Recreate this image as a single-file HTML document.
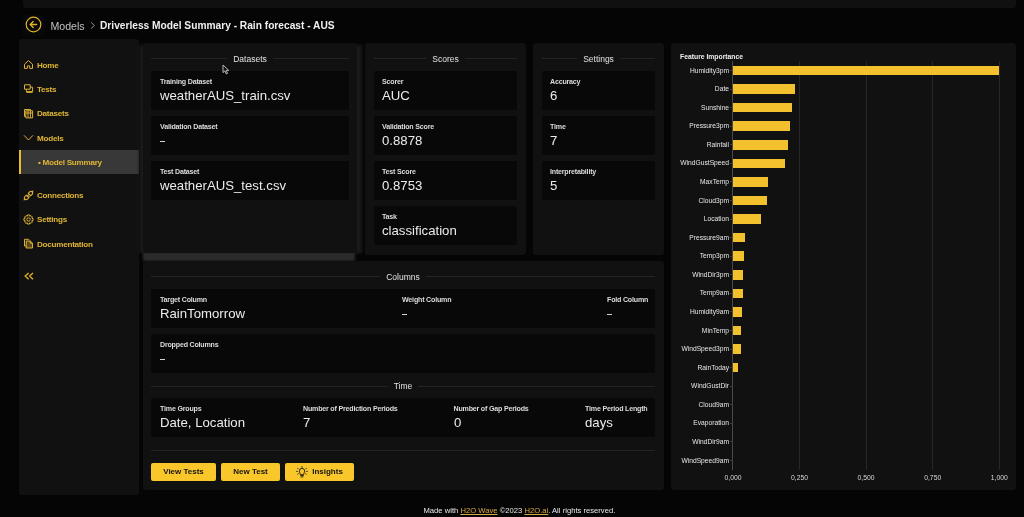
<!DOCTYPE html>
<html><head><meta charset="utf-8">
<style>
*{margin:0;padding:0;box-sizing:border-box}
html,body{width:1024px;height:517px;overflow:hidden;background:#050505;font-family:"Liberation Sans",sans-serif;color:#e6e6e6}
.abs{position:absolute}
body{will-change:transform}
.topbar{left:23px;top:0;width:993px;height:8px;background:#101010;border-radius:0 0 3px 3px}
.back{left:23px;top:14.5px;width:22px;height:21px;background:#080808}
.crumb{top:18.5px;font-size:10.2px;line-height:14px;white-space:nowrap}
.side{left:19px;top:39px;width:120px;height:456px;background:#111111;border-radius:3px}
.nav{left:37px;font-size:8.1px;letter-spacing:-0.25px;font-weight:bold;color:#e0b534;line-height:10px;white-space:nowrap}
.ico{left:24px;width:10px;height:10px}
.sel{left:19px;top:150px;width:120px;height:24px;background:#383838;border-left:2px solid #e8bd2e}
.panel{background:#111111;border-radius:3px}
.card{background:#080808;position:absolute;border-radius:2px}
.lbl{position:absolute;font-size:7.1px;letter-spacing:-0.2px;font-weight:bold;color:#dcdcdc;white-space:nowrap;line-height:8px}
.val{position:absolute;font-size:13.2px;color:#ececec;white-space:nowrap;line-height:15px}
.hdr{position:absolute;display:flex;align-items:center;height:10px}
.hdr i{flex:1;height:1px;background:#242424}
.hdr span{font-size:8.5px;color:#e2e2e2;white-space:nowrap;line-height:10px;margin:0 6px}
.ln{position:absolute;height:1px;background:#242424}
.btn{position:absolute;background:#fac72a;border-radius:2px;color:#141414;font-size:8px;font-weight:bold;text-align:center;line-height:18px;white-space:nowrap}
.flbl{position:absolute;right:295px;font-size:6.7px;color:#e6e6e6;white-space:nowrap;line-height:8px;text-align:right}
.bar{position:absolute;left:733px;height:9.6px;background:#f4c12e}
.grid{position:absolute;top:61px;width:1px;height:409px;background:#262626}
.ax{position:absolute;top:473.5px;font-size:6.8px;color:#d6d6d6;line-height:8px;white-space:nowrap;transform:translateX(-50%)}
</style></head><body>
<div class="abs topbar"></div>
<div class="abs back"></div>
<svg class="abs" style="left:24.8px;top:16.2px" width="17" height="17" viewBox="0 0 17 17">
<circle cx="8.5" cy="8.5" r="7.3" fill="none" stroke="#dfb02c" stroke-width="1.2"/>
<path d="M11.6 8.5H5.6M8.2 5.5L5.2 8.5L8.2 11.5" fill="none" stroke="#dfb02c" stroke-width="1.4" stroke-linecap="round" stroke-linejoin="round"/>
</svg>
<div class="abs crumb" style="left:50.5px;color:#c2c2c2;font-size:10.6px">Models</div>
<svg class="abs" style="left:89px;top:21px" width="7" height="9" viewBox="0 0 7 9" fill="none" stroke="#9a9a9a" stroke-width="1"><path d="M2.2 1.3L5.2 4.5L2.2 7.7"/></svg>
<div class="abs crumb" style="left:100px;font-weight:bold;color:#efefef">Driverless Model Summary - Rain forecast - AUS</div>

<div class="abs side"></div>
<div class="abs sel"></div>
<svg class="abs" style="left:23px;top:59px" width="11" height="11" viewBox="0 0 11 11" fill="none" stroke="#deb134" stroke-width="1" stroke-linejoin="round"><path d="M1.5 5.2L5.5 1.6L9.5 5.2V9.4H6.7V6.9H4.3V9.4H1.5Z"/></svg>
<svg class="abs" style="left:23px;top:83px" width="11" height="11" viewBox="0 0 11 11" fill="none" stroke="#deb134" stroke-width="1" stroke-linejoin="round"><path d="M1.5 1.8H7.2V6.2H1.5Z"/><path d="M3.4 6.2V8.6H9.6V4.2H7.2"/><path d="M3.4 9.4H9.6"/></svg>
<svg class="abs" style="left:23px;top:107.5px" width="11" height="11" viewBox="0 0 11 11" fill="none" stroke="#deb134" stroke-width="1"><path d="M1.5 1.5H7.5V2.8"/><path d="M1.5 1.5V8.5H2.8"/><path d="M2.8 2.8H9.6V9.9H2.8Z"/><path d="M5 2.8V9.9M7.4 2.8V9.9M2.8 5H9.6"/></svg>
<svg class="abs" style="left:23px;top:133px" width="11" height="9" viewBox="0 0 11 9" fill="none" stroke="#deb134" stroke-width="1"><path d="M1 2.3L5.5 7L10 2.3"/></svg>
<svg class="abs" style="left:23px;top:189.5px" width="11" height="11" viewBox="0 0 11 11" fill="none" stroke="#deb134" stroke-width="1.1" stroke-linecap="round"><path d="M3.3 5.2L5.8 7.7L4.4 9.1C3.6 9.9 2.6 9.9 1.9 9.1C1.1 8.4 1.1 7.4 1.9 6.6Z"/><path d="M1.9 9.1L1.1 9.9"/><path d="M5.3 3.3L7.7 5.7L9.1 4.3C9.9 3.5 9.9 2.5 9.1 1.8C8.4 1 7.4 1 6.6 1.8Z"/><path d="M9.1 1.8L9.9 1M4.2 6.2L5.4 5M6.2 6.4L5.5 7.1"/></svg>
<svg class="abs" style="left:23px;top:213.5px" width="11" height="11" viewBox="0 0 11 11" fill="none" stroke="#deb134" stroke-width="1"><path d="M4.6 0.9H6.4L6.8 2.3L8 1.6L9.4 3L8.7 4.2L10.1 4.6V6.4L8.7 6.8L9.4 8L8 9.4L6.8 8.7L6.4 10.1H4.6L4.2 8.7L3 9.4L1.6 8L2.3 6.8L0.9 6.4V4.6L2.3 4.2L1.6 3L3 1.6L4.2 2.3Z" stroke-linejoin="round"/><circle cx="5.5" cy="5.5" r="1.7"/></svg>
<svg class="abs" style="left:23px;top:238px" width="11" height="11" viewBox="0 0 11 11" fill="none" stroke="#deb134" stroke-width="1" stroke-linejoin="round"><path d="M1.5 1.3H5.6L6.6 2.3"/><path d="M1.5 1.3V8H3.2"/><path d="M3.2 3H7.3L9.5 5.2V10H3.2Z" fill="#deb134" fill-opacity="0.35"/><path d="M7.3 3V5.2H9.5"/></svg>
<svg class="abs" style="left:23px;top:271px" width="12" height="10" viewBox="0 0 12 10" fill="none" stroke="#dcae2e" stroke-width="1.4" stroke-linejoin="miter"><path d="M5.6 2L2.2 5.1L5.6 8.2M10 2L6.6 5.1L10 8.2"/></svg>
<div class="abs nav" style="top:60.5px">Home</div>
<div class="abs nav" style="top:84.5px">Tests</div>
<div class="abs nav" style="top:109.0px">Datasets</div>
<div class="abs nav" style="top:133.5px">Models</div>
<div class="abs nav" style="top:158.0px;left:38px">&bull; Model Summary</div>
<div class="abs nav" style="top:190.5px">Connections</div>
<div class="abs nav" style="top:215.0px">Settings</div>
<div class="abs nav" style="top:239.5px">Documentation</div>

<!-- Datasets panel -->
<div class="abs" style="left:139px;top:45px;width:223px;height:208px;background:#1a1a1a;filter:blur(1.5px)"></div>
<div class="abs" style="left:143px;top:252px;width:212px;height:9px;background:#2b2b2b;filter:blur(1.2px)"></div>
<div class="abs panel" style="left:143px;top:43px;width:214px;height:210px"></div>
<div class="hdr" style="left:151px;top:53.5px;width:198px"><i></i><span>Datasets</span><i></i></div>
<div class="card" style="left:151px;top:71px;width:198px;height:39px"></div>
<div class="lbl" style="left:160px;top:78px">Training Dataset</div>
<div class="val" style="left:160px;top:88px">weatherAUS_train.csv</div>
<div class="card" style="left:151px;top:116px;width:198px;height:39px"></div>
<div class="lbl" style="left:160px;top:123px">Validation Dataset</div>
<div class="abs" style="left:160px;top:141px;width:4.6px;height:1.4px;background:#d2d2d2"></div>
<div class="card" style="left:151px;top:161px;width:198px;height:39px"></div>
<div class="lbl" style="left:160px;top:168px">Test Dataset</div>
<div class="val" style="left:160px;top:178px">weatherAUS_test.csv</div>

<!-- Scores -->
<div class="abs panel" style="left:365px;top:43px;width:161px;height:212px"></div>
<div class="hdr" style="left:374px;top:53.5px;width:143px"><i></i><span>Scores</span><i></i></div>
<div class="card" style="left:374px;top:71px;width:143px;height:39px"></div>
<div class="lbl" style="left:382px;top:78px">Scorer</div>
<div class="val" style="left:382px;top:88px">AUC</div>
<div class="card" style="left:374px;top:116px;width:143px;height:39px"></div>
<div class="lbl" style="left:382px;top:123px">Validation Score</div>
<div class="val" style="left:382px;top:133px">0.8878</div>
<div class="card" style="left:374px;top:161px;width:143px;height:39px"></div>
<div class="lbl" style="left:382px;top:168px">Test Score</div>
<div class="val" style="left:382px;top:178px">0.8753</div>
<div class="card" style="left:374px;top:206px;width:143px;height:39px"></div>
<div class="lbl" style="left:382px;top:213px">Task</div>
<div class="val" style="left:382px;top:223px">classification</div>

<!-- Settings -->
<div class="abs panel" style="left:533px;top:43px;width:131px;height:212px"></div>
<div class="hdr" style="left:542px;top:53.5px;width:113px"><i></i><span>Settings</span><i></i></div>
<div class="card" style="left:542px;top:71px;width:113px;height:39px"></div>
<div class="lbl" style="left:550px;top:78px">Accuracy</div>
<div class="val" style="left:550px;top:88px">6</div>
<div class="card" style="left:542px;top:116px;width:113px;height:39px"></div>
<div class="lbl" style="left:550px;top:123px">Time</div>
<div class="val" style="left:550px;top:133px">7</div>
<div class="card" style="left:542px;top:161px;width:113px;height:39px"></div>
<div class="lbl" style="left:550px;top:168px">Interpretability</div>
<div class="val" style="left:550px;top:178px">5</div>

<!-- Columns panel -->
<div class="abs panel" style="left:143px;top:261px;width:521px;height:229px"></div>
<div class="hdr" style="left:151px;top:271.5px;width:504px"><i></i><span>Columns</span><i></i></div>
<div class="card" style="left:151px;top:289px;width:504px;height:39px"></div>
<div class="lbl" style="left:160px;top:296px">Target Column</div>
<div class="val" style="left:160px;top:306px">RainTomorrow</div>
<div class="lbl" style="left:402px;top:296px">Weight Column</div>
<div class="abs" style="left:402px;top:314px;width:4.6px;height:1.4px;background:#d2d2d2"></div>
<div class="lbl" style="left:607px;top:296px">Fold Column</div>
<div class="abs" style="left:607px;top:314px;width:4.6px;height:1.4px;background:#d2d2d2"></div>
<div class="card" style="left:151px;top:334px;width:504px;height:39px"></div>
<div class="lbl" style="left:160px;top:341px">Dropped Columns</div>
<div class="abs" style="left:160px;top:359px;width:4.6px;height:1.4px;background:#d2d2d2"></div>
<div class="hdr" style="left:151px;top:381px;width:504px"><i></i><span>Time</span><i></i></div>
<div class="card" style="left:151px;top:398px;width:504px;height:39px"></div>
<div class="lbl" style="left:160px;top:405px">Time Groups</div>
<div class="val" style="left:160px;top:415px">Date, Location</div>
<div class="lbl" style="left:303px;top:405px">Number of Prediction Periods</div>
<div class="val" style="left:303px;top:415px">7</div>
<div class="lbl" style="left:453.5px;top:405px">Number of Gap Periods</div>
<div class="val" style="left:454px;top:415px">0</div>
<div class="lbl" style="left:585px;top:405px">Time Period Length</div>
<div class="val" style="left:585px;top:415px">days</div>
<div class="ln" style="left:151px;top:450px;width:504px"></div>
<div class="btn" style="left:151px;top:463px;width:65px">View Tests</div>
<div class="btn" style="left:221px;top:463px;width:59px">New Test</div>
<div class="btn" style="left:285px;top:463px;width:69px"><svg style="position:absolute;left:11px;top:3px" width="12" height="12" viewBox="0 0 12 12" fill="none" stroke="#1a1a1a" stroke-width="0.9" stroke-linecap="round"><path d="M4.4 8.3C4.4 7.2 3.3 6.6 3.3 5.1A2.7 2.7 0 0 1 8.7 5.1C8.7 6.6 7.6 7.2 7.6 8.3Z"/><path d="M4.6 9.6H7.4M5 10.9H7"/><path d="M6 0.6V1.4M1.6 2.3L2.2 2.9M10.4 2.3L9.8 2.9M0.6 5.4H1.4M10.6 5.4H11.4M1.7 8.2L2.3 7.7M10.3 8.2L9.7 7.7"/></svg><span style="padding-left:16px">Insights</span></div>

<!-- Chart -->
<div class="abs panel" style="left:671px;top:43px;width:345px;height:447px"></div>
<div class="abs" style="left:680px;top:52.5px;font-size:6.8px;font-weight:bold;color:#efefef;line-height:8px">Feature Importance</div>
<div class="grid" style="left:799.1px"></div>
<div class="grid" style="left:865.6px"></div>
<div class="grid" style="left:932.2px"></div>
<div class="grid" style="left:998.8px"></div>
<div class="grid" style="left:732.0px;background:#4a4a4a"></div>
<div class="flbl" style="top:66.5px">Humidity3pm</div>
<div class="abs" style="left:730px;top:70.0px;width:3px;height:1px;background:#404040"></div>
<div class="bar" style="top:65.7px;width:266.3px"></div>
<div class="flbl" style="top:85.1px">Date</div>
<div class="abs" style="left:730px;top:88.6px;width:3px;height:1px;background:#404040"></div>
<div class="bar" style="top:84.3px;width:62.0px"></div>
<div class="flbl" style="top:103.6px">Sunshine</div>
<div class="abs" style="left:730px;top:107.1px;width:3px;height:1px;background:#404040"></div>
<div class="bar" style="top:102.8px;width:58.6px"></div>
<div class="flbl" style="top:122.2px">Pressure3pm</div>
<div class="abs" style="left:730px;top:125.7px;width:3px;height:1px;background:#404040"></div>
<div class="bar" style="top:121.4px;width:57.3px"></div>
<div class="flbl" style="top:140.8px">Rainfall</div>
<div class="abs" style="left:730px;top:144.3px;width:3px;height:1px;background:#404040"></div>
<div class="bar" style="top:140.0px;width:55.1px"></div>
<div class="flbl" style="top:159.3px">WindGustSpeed</div>
<div class="abs" style="left:730px;top:162.8px;width:3px;height:1px;background:#404040"></div>
<div class="bar" style="top:158.5px;width:52.2px"></div>
<div class="flbl" style="top:177.9px">MaxTemp</div>
<div class="abs" style="left:730px;top:181.4px;width:3px;height:1px;background:#404040"></div>
<div class="bar" style="top:177.1px;width:35.2px"></div>
<div class="flbl" style="top:196.5px">Cloud3pm</div>
<div class="abs" style="left:730px;top:200.0px;width:3px;height:1px;background:#404040"></div>
<div class="bar" style="top:195.7px;width:33.6px"></div>
<div class="flbl" style="top:215.1px">Location</div>
<div class="abs" style="left:730px;top:218.6px;width:3px;height:1px;background:#404040"></div>
<div class="bar" style="top:214.3px;width:28.2px"></div>
<div class="flbl" style="top:233.6px">Pressure9am</div>
<div class="abs" style="left:730px;top:237.1px;width:3px;height:1px;background:#404040"></div>
<div class="bar" style="top:232.8px;width:11.5px"></div>
<div class="flbl" style="top:252.2px">Temp3pm</div>
<div class="abs" style="left:730px;top:255.7px;width:3px;height:1px;background:#404040"></div>
<div class="bar" style="top:251.4px;width:10.9px"></div>
<div class="flbl" style="top:270.8px">WindDir3pm</div>
<div class="abs" style="left:730px;top:274.3px;width:3px;height:1px;background:#404040"></div>
<div class="bar" style="top:270.0px;width:10.4px"></div>
<div class="flbl" style="top:289.3px">Temp9am</div>
<div class="abs" style="left:730px;top:292.8px;width:3px;height:1px;background:#404040"></div>
<div class="bar" style="top:288.5px;width:9.6px"></div>
<div class="flbl" style="top:307.9px">Humidity9am</div>
<div class="abs" style="left:730px;top:311.4px;width:3px;height:1px;background:#404040"></div>
<div class="bar" style="top:307.1px;width:8.8px"></div>
<div class="flbl" style="top:326.5px">MinTemp</div>
<div class="abs" style="left:730px;top:330.0px;width:3px;height:1px;background:#404040"></div>
<div class="bar" style="top:325.7px;width:8.0px"></div>
<div class="flbl" style="top:345.1px">WindSpeed3pm</div>
<div class="abs" style="left:730px;top:348.6px;width:3px;height:1px;background:#404040"></div>
<div class="bar" style="top:344.2px;width:7.7px"></div>
<div class="flbl" style="top:363.6px">RainToday</div>
<div class="abs" style="left:730px;top:367.1px;width:3px;height:1px;background:#404040"></div>
<div class="bar" style="top:362.8px;width:5.1px"></div>
<div class="flbl" style="top:382.2px">WindGustDir</div>
<div class="abs" style="left:730px;top:385.7px;width:3px;height:1px;background:#404040"></div>
<div class="flbl" style="top:400.8px">Cloud9am</div>
<div class="abs" style="left:730px;top:404.3px;width:3px;height:1px;background:#404040"></div>
<div class="flbl" style="top:419.3px">Evaporation</div>
<div class="abs" style="left:730px;top:422.8px;width:3px;height:1px;background:#404040"></div>
<div class="flbl" style="top:437.9px">WindDir9am</div>
<div class="abs" style="left:730px;top:441.4px;width:3px;height:1px;background:#404040"></div>
<div class="flbl" style="top:456.5px">WindSpeed9am</div>
<div class="abs" style="left:730px;top:460.0px;width:3px;height:1px;background:#404040"></div>
<div class="ax" style="left:733.0px">0,000</div>
<div class="ax" style="left:799.6px">0,250</div>
<div class="ax" style="left:866.1px">0,500</div>
<div class="ax" style="left:932.7px">0,750</div>
<div class="ax" style="left:999.3px">1,000</div>

<svg class="abs" style="left:222px;top:64px" width="9" height="12" viewBox="0 0 9 12"><path d="M1 1V8.6L2.9 6.9L4.3 10L5.5 9.4L4.2 6.4H6.8Z" fill="#141414" stroke="#c8c8c8" stroke-width="0.9" stroke-linejoin="round"/></svg>
<div class="abs" style="left:423.5px;top:506px;font-size:7.65px;color:#e8e8e8;line-height:10px;white-space:nowrap">Made with <span style="color:#d6a844;text-decoration:underline">H2O Wave</span> ©2023 <span style="color:#d6a844;text-decoration:underline">H2O.ai</span>. All rights reserved.</div>
</body></html>
